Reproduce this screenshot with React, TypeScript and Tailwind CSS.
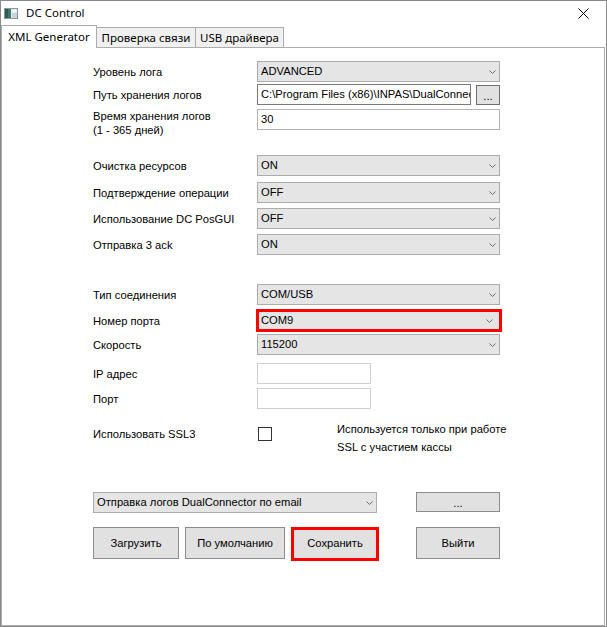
import React from "react";

// Small drop-down arrow used in the combo boxes
function Chevron() {
  return (
    <svg width="7" height="4" viewBox="0 0 7 4" className="shrink-0">
      <polyline points="0.5,0.5 3.5,3.5 6.5,0.5" fill="none" stroke="#6a6a6a" strokeWidth="1" />
    </svg>
  );
}

function Combo({ value, className }: { value: string; className: string }) {
  return (
    <div className={`flex items-center h-[21px] border border-[#acacac] bg-[#e5e5e5] pl-[3px] pr-[3px] ${className}`}>
      <span className="flex-1 truncate leading-[19px]">{value}</span>
      <Chevron />
    </div>
  );
}

function Row({ label, children, className }: { label: React.ReactNode; children: React.ReactNode; className: string }) {
  return (
    <div className={`flex items-center ${className}`}>
      <div className="w-[164px] shrink-0 leading-[14px]">{label}</div>
      {children}
    </div>
  );
}

function WindowIcon() {
  return (
    <svg width="14" height="11" viewBox="0 0 14 11">
      <rect x="0.5" y="0.5" width="13" height="10" fill="#e6ebef" stroke="#8a96a0" />
      <rect x="1" y="1" width="6" height="9" fill="#3f7a68" />
      <rect x="1" y="1" width="3" height="9" fill="#2a5c50" />
      <rect x="9" y="2" width="3" height="2" fill="#ffffff" />
      <rect x="8" y="5" width="5" height="5" fill="#c9d2d9" />
    </svg>
  );
}

export default function App() {
  return (
    <div className="w-[607px] h-[627px] bg-white border border-[#8a8a8a] flex flex-col overflow-hidden">
      {/* title bar */}
      <div className="h-[24px] shrink-0 flex items-center relative">
        <div className="ml-[3px] mt-[1px]">
          <WindowIcon />
        </div>
        <span className="ml-[8px] text-[11.5px] font-['Noto_Sans',sans-serif] text-black leading-none">DC Control</span>
        <svg width="11" height="11" viewBox="0 0 11 11" className="ml-auto mr-[17px] mt-[1px]">
          <line x1="0.5" y1="0.5" x2="10.5" y2="10.5" stroke="#000" strokeWidth="1" />
          <line x1="10.5" y1="0.5" x2="0.5" y2="10.5" stroke="#000" strokeWidth="1" />
        </svg>
      </div>

      {/* tab strip */}
      <div className="h-[22px] shrink-0 flex items-end font-['Noto_Sans',sans-serif] text-[11.5px] text-black relative z-10">
        <div className="w-[96px] h-[23px] -mb-px bg-white border-t border-l border-r border-[#acacac] flex items-center justify-center pb-[1px]">
          XML Generator
        </div>
        <div className="w-[99px] h-[20px] bg-[#f0f0f0] border-t border-r border-[#acacac] flex items-center justify-center">
          Проверка связи
        </div>
        <div className="w-[88px] h-[20px] bg-[#f0f0f0] border-t border-r border-[#acacac] flex items-center justify-center">
          USB драйвера
        </div>
      </div>

      {/* tab page */}
      <div className="flex-1 mr-[1px] border border-[#acacac] pl-[91px] font-['Liberation_Sans',Arial,sans-serif] text-[11.2px] text-black">
        <Row label="Уровень лога" className="mt-[13px]">
          <Combo value="ADVANCED" className="w-[243px]" />
        </Row>

        <div className="flex items-start mt-[2px]">
          <div className="w-[164px] shrink-0 leading-[14px] mt-[4px]">Путь хранения логов</div>
          <div className="w-[214px] h-[21px] border border-[#7a7a7a] bg-white pl-[3px] leading-[19px] overflow-hidden whitespace-nowrap">
            C:\Program Files (x86)\INPAS\DualConnec
          </div>
          <div className="w-[24px] h-[20px] ml-[5px] mt-[1px] border border-[#707070] bg-[#e1e1e1] flex items-end justify-center leading-[15px]">
            ...
          </div>
        </div>

        <div className="flex items-start mt-[4px]">
          <div className="w-[164px] shrink-0 leading-[14px]">
            Время хранения логов
            <br />
            (1 - 365 дней)
          </div>
          <div className="w-[243px] h-[21px] border border-[#b4b4b4] bg-white pl-[3px] leading-[19px]">30</div>
        </div>

        <Row label="Очистка ресурсов" className="mt-[18px]">
          <Combo value="ON" className="w-[243px]" />
        </Row>
        <Row label="Подтверждение операции" className="mt-[6px]">
          <Combo value="OFF" className="w-[243px]" />
        </Row>
        <Row label="Использование DC PosGUI" className="mt-[5px]">
          <Combo value="OFF" className="w-[243px]" />
        </Row>
        <Row label="Отправка 3 ack" className="mt-[5px]">
          <Combo value="ON" className="w-[243px]" />
        </Row>

        <Row label="Тип соединения" className="mt-[29px]">
          <Combo value="COM/USB" className="w-[243px]" />
        </Row>
        <div className="flex items-center mt-[4px]">
          <div className="w-[163px] shrink-0 leading-[14px]">Номер порта</div>
          <div className="w-[246px] h-[23px] border-[3px] border-[#ff0000] bg-[#e5e5e5] flex items-center pl-[2px] pr-[6px]">
            <span className="flex-1 leading-[17px]">COM9</span>
            <Chevron />
          </div>
        </div>
        <Row label="Скорость" className="mt-[2px]">
          <Combo value="115200" className="w-[243px]" />
        </Row>

        <Row label="IP адрес" className="mt-[8px]">
          <div className="w-[114px] h-[21px] border border-[#cfcfcf] bg-white" />
        </Row>
        <Row label="Порт" className="mt-[4px]">
          <div className="w-[114px] h-[21px] border border-[#cfcfcf] bg-white" />
        </Row>

        <div className="flex items-start mt-[11px]">
          <div className="w-[164px] shrink-0 leading-[14px] mt-[7px]">Использовать SSL3</div>
          <div className="w-[14px] h-[14px] ml-[1px] mt-[7px] border border-[#333333] bg-white shrink-0" />
          <div className="ml-[65px] leading-[18px]">
            Используется только при работе
            <br />
            SSL с участием кассы
          </div>
        </div>

        <div className="flex items-start mt-[36px]">
          <Combo value="Отправка логов DualConnector по email" className="w-[284px]" />
          <div className="w-[84px] h-[20px] ml-[39px] border border-[#8c8c8c] bg-[#e1e1e1] flex items-end justify-center leading-[15px]">
            ...
          </div>
        </div>

        <div className="flex items-start mt-[14px]">
          <div className="w-[86px] h-[32px] border border-[#8c8c8c] bg-[#e1e1e1] flex items-center justify-center">
            Загрузить
          </div>
          <div className="w-[100px] h-[32px] ml-[6px] border border-[#8c8c8c] bg-[#e1e1e1] flex items-center justify-center">
            По умолчанию
          </div>
          <div className="w-[88px] h-[34px] ml-[6px] border-[3px] border-[#ff0000] bg-[#e1e1e1] flex items-center justify-center pb-[2px]">
            Сохранить
          </div>
          <div className="w-[84px] h-[32px] ml-[37px] border border-[#8c8c8c] bg-[#e1e1e1] flex items-center justify-center">
            Выйти
          </div>
        </div>
      </div>
    </div>
  );
}
